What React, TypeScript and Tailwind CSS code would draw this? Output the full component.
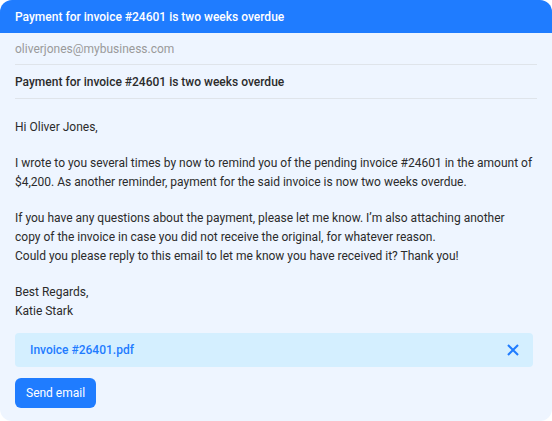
import * as React from 'react';

const XIcon = () => (
  <svg width="12" height="12" viewBox="0 0 14 14" fill="none" stroke="currentColor" strokeWidth="2.4" strokeLinecap="square">
    <path d="M2 2l10 10M12 2L2 12" />
  </svg>
);

export default function App() {
  return (
    <div className="w-[552px] h-[421px] bg-white" style={{ fontFamily: 'Roboto, "Liberation Sans", sans-serif' }}>
      <div className="h-full flex flex-col rounded-[12px] overflow-hidden bg-[#eef5ff]">
        <div className="h-[33px] shrink-0 bg-[#1f7cff] text-white text-[12px] font-medium flex items-center px-[15px]">
          Payment for invoice #24601 is two weeks overdue
        </div>
        <div className="flex flex-col px-[15px]">
          <div className="h-[32px] flex items-center text-[12px] text-[#9a9a9a] border-b border-[#dfe4ea]">
            oliverjones@mybusiness.com
          </div>
          <div className="h-[34px] flex items-center text-[12px] font-medium text-[#2b2b2b] border-b border-[#dfe4ea]">
            Payment for invoice #24601 is two weeks overdue
          </div>
          <div className="pt-[19px] text-[12px] leading-[19px] text-[#2b2b2b] flex flex-col gap-[17px]">
            <p>Hi Oliver Jones,</p>
            <p>
              I wrote to you several times by now to remind you of the pending invoice #24601 in the amount of $4,200. As another reminder, payment for the said invoice is now two weeks overdue.
            </p>
            <p>
              If you have any questions about the payment, please let me know. I’m also attaching another
              <br />
              copy of the invoice in case you did not receive the original, for whatever reason.
              <br />
              Could you please reply to this email to let me know you have received it? Thank you!
            </p>
            <p>
              Best Regards,
              <br />
              Katie Stark
            </p>
          </div>
          <div className="mt-[12px] mr-[4px] h-[34px] rounded-[4px] bg-[#d4efff] flex items-center justify-between pl-[15px] pr-[14px]">
            <span className="text-[12px] font-medium text-[#1f7cff]">Invoice #26401.pdf</span>
            <span className="text-[#1f7cff]"><XIcon /></span>
          </div>
          <div className="mt-[11px]">
            <button className="h-[30px] px-[11px] rounded-[6px] bg-[#1f7cff] text-white text-[12px]">Send email</button>
          </div>
        </div>
      </div>
    </div>
  );
}
